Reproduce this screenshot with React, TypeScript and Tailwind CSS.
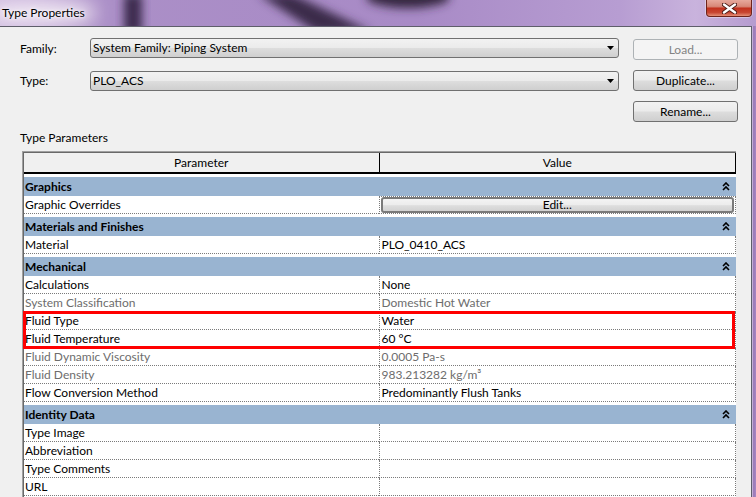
import type { ReactNode } from "react";

type Row = { name: string; value?: ReactNode; muted?: boolean };
type Group = { title: string; rows: Row[] };

const ui = "font-['Lato','Liberation_Sans',sans-serif] text-[12px]";

const btnFace =
  "bg-[linear-gradient(#f2f2f2_0%,#ebebeb_48%,#dddddd_52%,#cfcfcf_100%)] border border-[#707070] rounded-[3px]";

function EditButton() {
  return (
    <div
      className={`mx-[1px] h-[16px] flex items-center justify-center border-2 border-[#7a7a7a] rounded-[3px] bg-[linear-gradient(#f4f4f4_0%,#ececec_50%,#dedede_55%,#d2d2d2_100%)] text-black`}
    >
      Edit...
    </div>
  );
}

const groups: Group[] = [
  { title: "Graphics", rows: [{ name: "Graphic Overrides", value: <EditButton /> }] },
  { title: "Materials and Finishes", rows: [{ name: "Material", value: "PLO_0410_ACS" }] },
  {
    title: "Mechanical",
    rows: [
      { name: "Calculations", value: "None" },
      { name: "System Classification", value: "Domestic Hot Water", muted: true },
      { name: "Fluid Type", value: "Water" },
      { name: "Fluid Temperature", value: "60 °C" },
      { name: "Fluid Dynamic Viscosity", value: "0.0005 Pa-s", muted: true },
      { name: "Fluid Density", value: "983.213282 kg/m³", muted: true },
      { name: "Flow Conversion Method", value: "Predominantly Flush Tanks" },
    ],
  },
  {
    title: "Identity Data",
    rows: [{ name: "Type Image" }, { name: "Abbreviation" }, { name: "Type Comments" }, { name: "URL" }],
  },
];

function Collapse() {
  return (
    <svg width="8" height="9" viewBox="0 0 8 9" fill="none" stroke="#000" strokeWidth="1.6">
      <path d="M1 4 L4 1 L7 4" />
      <path d="M1 8 L4 5 L7 8" />
    </svg>
  );
}

function DropArrow() {
  return (
    <svg width="7" height="4" viewBox="0 0 7 4">
      <path d="M0 0 H7 L3.5 4 Z" fill="#000" />
    </svg>
  );
}

function Combo({ text }: { text: string }) {
  return (
    <div className={`flex-1 h-[20px] flex items-center justify-between pl-[2px] pr-[4px] ${btnFace}`}>
      <span className="text-black">{text}</span>
      <DropArrow />
    </div>
  );
}

function Button({ label, disabled }: { label: string; disabled?: boolean }) {
  return (
    <div
      className={`w-[105px] h-[21px] shrink-0 flex items-center justify-center ${
        disabled
          ? "border border-[#adb2b5] rounded-[3px] bg-[#f4f4f4] text-[#838383]"
          : `${btnFace} text-black`
      }`}
    >
      {label}
    </div>
  );
}

function TitleBar() {
  return (
    <div className="relative h-[26px] flex items-start shrink-0">
      <svg className="absolute inset-0" width="756" height="26" viewBox="0 0 756 26">
        <defs>
          <linearGradient id="tb" x1="0" x2="1" y1="0" y2="0">
            <stop offset="0" stopColor="#cdb9de" />
            <stop offset="0.14" stopColor="#ab8fc7" />
            <stop offset="0.55" stopColor="#a88ac6" />
            <stop offset="0.82" stopColor="#b79dd2" />
            <stop offset="0.92" stopColor="#c9b3dd" />
            <stop offset="1" stopColor="#b59bcf" />
          </linearGradient>
          <filter id="soft" x="-50%" y="-50%" width="200%" height="200%">
            <feGaussianBlur stdDeviation="5" />
          </filter>
          <filter id="glow" x="-50%" y="-50%" width="200%" height="200%">
            <feGaussianBlur stdDeviation="9" />
          </filter>
        </defs>
        <rect width="756" height="26" fill="url(#tb)" />
        <ellipse cx="42" cy="13" rx="55" ry="13" fill="#f6eef7" opacity="0.85" filter="url(#glow)" />
        <rect x="124" y="-6" width="18" height="40" fill="#3d2c4f" filter="url(#soft)" />
        <path d="M258 -6 L292 -6 L372 32 L316 32 Z" fill="#3a2a4a" filter="url(#soft)" />
        <ellipse cx="408" cy="-3" rx="42" ry="11" fill="#36263f" filter="url(#soft)" />
      </svg>
      <span className="relative pl-[2px] leading-[25px] text-black [text-shadow:0_0_6px_#fff,0_0_3px_#fff]">
        Type Properties
      </span>
      {/* close button */}
      <div className="relative ml-auto mr-[4px] w-[46px] h-[17px] flex items-center justify-center border border-t-0 border-[#6e231b] rounded-b-[4px] bg-[linear-gradient(#e7a99c_0%,#d88878_40%,#c2321e_52%,#c84632_78%,#e58f77_100%)] shadow-[0_0_0_1px_rgba(255,255,255,0.35)]">
        <svg width="15" height="11" viewBox="0 0 15 11">
          <path d="M2 1.5 L13 9.5 M13 1.5 L2 9.5" stroke="#4a1a14" strokeWidth="4.2" strokeLinecap="round" />
          <path d="M2 1.5 L13 9.5 M13 1.5 L2 9.5" stroke="#fff" strokeWidth="2.4" strokeLinecap="round" />
        </svg>
      </div>
    </div>
  );
}

function PropertyTable() {
  return (
    <div className="relative mt-[5px] ml-[22px] mr-[15px] flex-1 min-h-0 overflow-hidden border-l border-t border-[#a0a0a0]">
      <div className="h-full border-l border-t border-[#696969] bg-white">
        {/* header */}
        <div className="flex h-[21px] bg-[#f0f0f0]">
          <div className="w-[355px] flex items-center justify-center border-b-2 border-black">Parameter</div>
          <div className="w-[358px] flex items-center justify-center border-x border-b-2 border-black">Value</div>
        </div>

        {groups.map((g) => (
          <div key={g.title}>
            <div className="pt-[3px] bg-white">
              <div className="h-[19px] flex items-center justify-between pl-[1px] pr-[6px] bg-[#99b4d1] font-bold">
                <span>{g.title}</span>
                <Collapse />
              </div>
            </div>
            {g.rows.map((r) => (
              <div key={r.name} className={`flex h-[18px] ${r.muted ? "text-[#6d6d6d]" : "text-black"}`}>
                <div className="w-[355px] pl-[1px] leading-[17px] border-b border-dotted border-[#7a7a7a]">
                  {r.name}
                </div>
                {typeof r.value === "string" || r.value === undefined ? (
                  <div className="w-[358px] pl-[2px] leading-[17px] border-x border-b border-dotted border-[#7a7a7a]">
                    {r.value}
                  </div>
                ) : (
                  <div className="w-[358px] border border-dotted border-[#7a7a7a]">{r.value}</div>
                )}
              </div>
            ))}
          </div>
        ))}
      </div>

      {/* highlighted fluid rows */}
      <div className="absolute left-0 top-[159px] w-[712px] h-[38px] border-[3px] border-[#ff0000]" />
    </div>
  );
}

export default function App() {
  return (
    <div className={`w-[756px] h-[497px] overflow-hidden flex flex-col bg-[#9f80bb] ${ui}`}>
      <TitleBar />
      <div className="flex flex-1 min-h-0">
        <div className="w-[752px] flex flex-col bg-[#f0f0f0] border-t border-r border-[#5e5e6a] pt-[11px]">
          <div className="flex items-start pl-[20px] pr-[13px] h-[22px]">
            <div className="w-[70px] mt-[1px] leading-[20px] text-black">Family:</div>
            <Combo text="System Family: Piping System" />
            <div className="ml-[14px] mt-[1px]">
              <Button label="Load..." disabled />
            </div>
          </div>
          <div className="flex items-start pl-[20px] pr-[13px] mt-[10px] h-[21px]">
            <div className="w-[70px] mt-[1px] leading-[20px] text-black">Type:</div>
            <div className="flex-1 mt-[1px] flex">
              <Combo text="PLO_ACS" />
            </div>
            <div className="ml-[14px]">
              <Button label="Duplicate..." />
            </div>
          </div>
          <div className="flex justify-end pr-[13px] mt-[10px]">
            <Button label="Rename..." />
          </div>
          <div className="pl-[20px] mt-[8px] leading-[16px] text-black">Type Parameters</div>
          <PropertyTable />
        </div>
        <div className="flex-1 bg-[linear-gradient(90deg,#d8c8e6,#9a78b6_40%,#a887c4)]" />
      </div>
    </div>
  );
}
